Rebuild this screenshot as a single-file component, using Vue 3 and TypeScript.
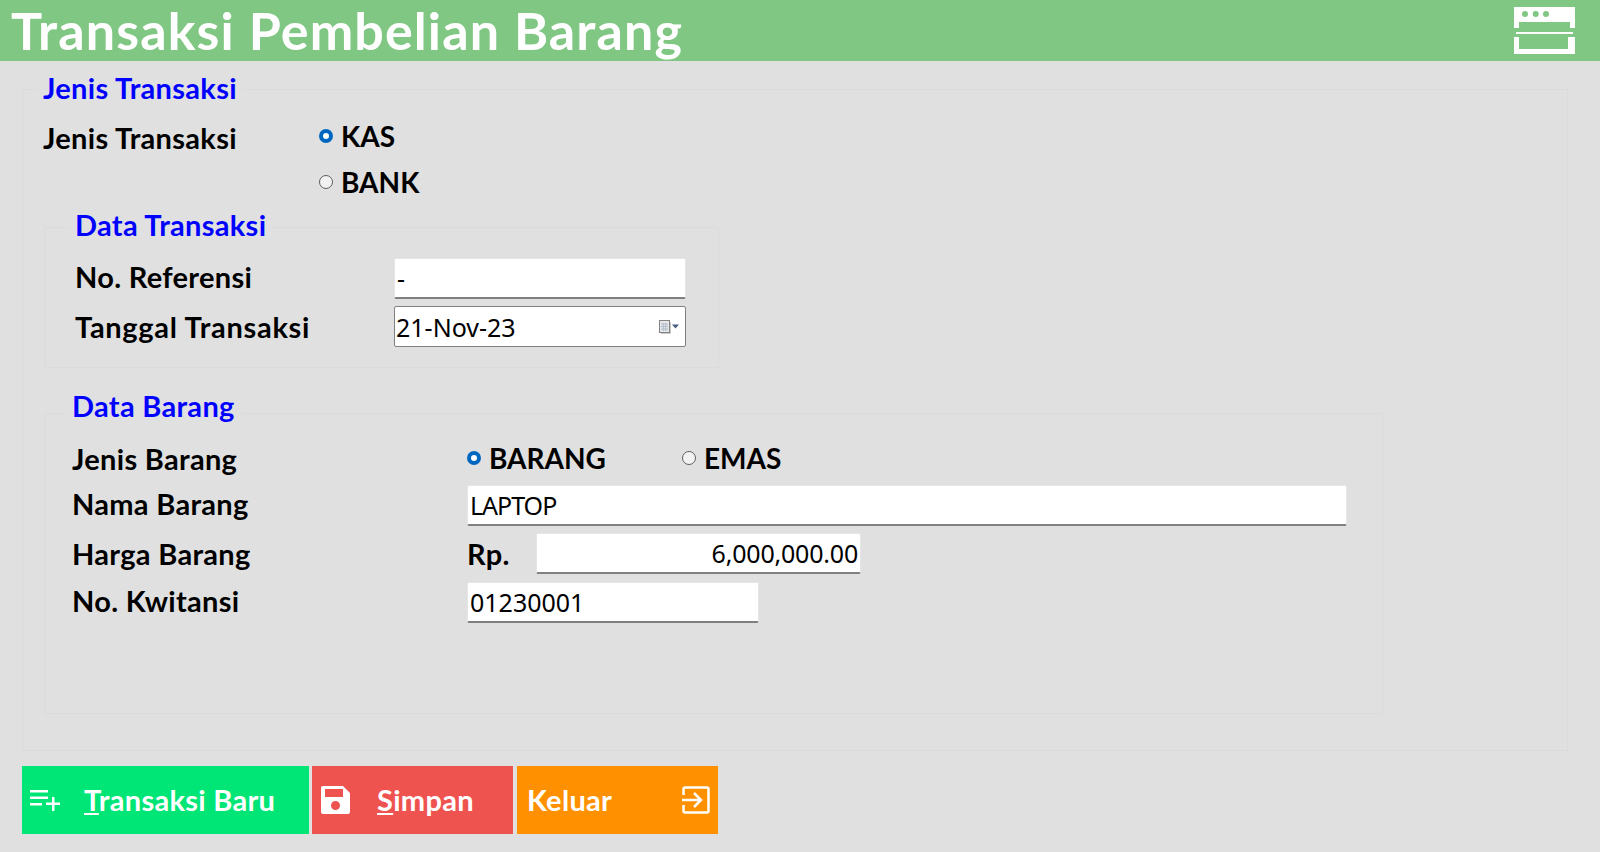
<script setup lang="ts">
import { ref } from 'vue';

const jenisTransaksi = ref('KAS');
const jenisBarang = ref('BARANG');
const noReferensi = ref('-');
const tanggal = ref('21-Nov-23');
const namaBarang = ref('LAPTOP');
const harga = ref('6,000,000.00');
const noKwitansi = ref('01230001');
</script>

<template>
  <div class="page">
    <header class="top">
      <h1>Transaksi Pembelian Barang</h1>
      <svg class="top-icon" viewBox="0 0 61 47" aria-hidden="true">
        <path fill-rule="evenodd" d="M0 0h61v21h-5v-6H5v6H0zM8 7a3 3 0 1 0 6 0a3 3 0 1 0-6 0zM18.700 7a3 3 0 1 0 6 0a3 3 0 1 0-6 0zM29 7a3 3 0 1 0 6 0a3 3 0 1 0-6 0z" fill="#fff" />
        <rect x="2" y="25" width="57" height="2" fill="#fff" />
        <path d="M0 30h5v12h49V30h7v17H0z" fill="#fff" />
      </svg>
    </header>

    <fieldset class="box outer">
      <legend>Jenis Transaksi</legend>
      <div class="jenis-row">
        <span class="label">Jenis Transaksi</span>
        <div class="radio-stack">
          <label class="radio"><input v-model="jenisTransaksi" type="radio" value="KAS" />KAS</label>
          <label class="radio"><input v-model="jenisTransaksi" type="radio" value="BANK" />BANK</label>
        </div>
      </div>

      <fieldset class="box data-transaksi">
        <legend>Data Transaksi</legend>
        <div class="form-grid">
          <span class="label up">No. Referensi</span>
          <input v-model="noReferensi" class="field" type="text" />
          <span class="label wide">Tanggal Transaksi</span>
          <div class="date-field">
            <input v-model="tanggal" type="text" />
            <svg width="24" height="16" viewBox="0 0 24 16" aria-hidden="true">
              <rect x="2" y="3" width="10" height="12" fill="#c9c9c9" />
              <rect x="0.500" y="1.500" width="10" height="12" fill="#e3e6ec" stroke="#86827f" />
              <path d="M2 5h7M2 7.500h7M2 10h7M4.300 4v8M6.700 4v8" stroke="#b4bcc9" fill="none" />
              <path d="M13 5.500h7l-3.500 4z" fill="#4a5d80" />
            </svg>
          </div>
        </div>
      </fieldset>

      <fieldset class="box data-barang">
        <legend>Data Barang</legend>
        <div class="form-grid barang-grid">
          <span class="label">Jenis Barang</span>
          <div class="radio-line">
            <label class="radio"><input v-model="jenisBarang" type="radio" value="BARANG" />BARANG</label>
            <label class="radio"><input v-model="jenisBarang" type="radio" value="EMAS" />EMAS</label>
          </div>
          <span class="label up">Nama Barang</span>
          <input v-model="namaBarang" class="field nama" type="text" />
          <span class="label">Harga Barang</span>
          <div class="harga">
            <span class="label">Rp.</span>
            <input v-model="harga" class="field right" type="text" />
          </div>
          <span class="label last-label">No. Kwitansi</span>
          <input v-model="noKwitansi" class="field kwitansi last" type="text" />
        </div>
      </fieldset>
    </fieldset>

    <div class="actions">
      <button class="btn green" type="button">
        <svg width="31" height="22" viewBox="0 0 31 22" aria-hidden="true">
          <path d="M0 1h18v2.500H0zM0 7.500h18V10H0zM0 14h12v2.500H0zM22 8h2.500v5.500H30V16h-5.500v6H22v-6h-6v-2.500h6z" fill="#fff" />
        </svg>
        <span class="txt"><u>T</u>ransaksi Baru</span>
      </button>
      <button class="btn red" type="button">
        <svg width="29" height="28" viewBox="0 0 29 28" aria-hidden="true">
          <path fill-rule="evenodd" d="M2 0h20l7 7v19a2 2 0 0 1-2 2H2a2 2 0 0 1-2-2V2a2 2 0 0 1 2-2zM4 3v8h18V3zM10 19.500a4.500 4.500 0 1 0 9 0a4.500 4.500 0 1 0-9 0z" fill="#fff" />
        </svg>
        <span class="txt"><u>S</u>impan</span>
      </button>
      <button class="btn orange" type="button">
        <span class="txt">Keluar</span>
        <svg width="28" height="28" viewBox="0 0 28 28" aria-hidden="true">
          <path d="M1.500 9V3a1.500 1.500 0 0 1 1.500-1.500h22A1.500 1.500 0 0 1 26.500 3v22a1.500 1.500 0 0 1-1.500 1.500H3A1.500 1.500 0 0 1 1.500 25v-6M0 14h19M12 7l7 7-7 7" fill="none" stroke="#fff" stroke-width="2.500" />
        </svg>
      </button>
    </div>
  </div>
</template>

<style scoped>
.page {
  height: 852px;
  overflow: hidden;
  background: #e0e0e0;
  font-family: Lato, 'Noto Sans', sans-serif;
  color: #000;
}
.top {
  height: 61px;
  display: flex;
  align-items: flex-start;
  justify-content: space-between;
  overflow: hidden;
  background: #81c784;
  padding: 0 25px 0 11px;
  box-sizing: border-box;
}
.top h1 {
  margin: 0;
  font-size: 52px;
  line-height: 61px;
  letter-spacing: 1.12px;
  font-weight: 700;
  color: #fff;
}
.top-icon {
  width: 61px;
  height: 47px;
  margin-top: 7px;
}
.box {
  min-width: 0;
  margin: 0;
  border: 1px solid #dbdbdb;
  box-sizing: border-box;
}
legend {
  color: #0000ff;
  font-size: 29px;
  font-weight: 700;
  line-height: 38px;
  letter-spacing: 0.3px;
  padding: 0 6px;
}
.outer {
  height: 682px;
  margin: 8px 32px 0 22px;
  padding: 0 0 0 20px;
}
.outer > legend {
  margin-left: -6px;
  padding-bottom: 2px;
}
.label {
  font-size: 29px;
  font-weight: 700;
  line-height: 38px;
  letter-spacing: 0.3px;
}
.wide {
  letter-spacing: 0.7px;
}
.up {
  margin: -2px 0 2px;
}
.last-label {
  margin: -1px 0 1px;
}
.jenis-row {
  display: grid;
  grid-template-columns: 276px 1fr;
  padding-top: 10px;
}
.radio-stack {
  display: flex;
  flex-direction: column;
  gap: 8px;
  margin-top: -2px;
}
.radio {
  display: flex;
  align-items: center;
  gap: 8px;
  font-size: 28px;
  font-weight: 700;
  line-height: 38px;
}
.radio input {
  appearance: none;
  width: 14px;
  height: 14px;
  margin: 0;
  border: 1px solid #5f5f5f;
  border-radius: 50%;
  background: #f2f2f2;
  box-sizing: border-box;
}
.radio input:checked {
  border: 4px solid #0067c0;
  background: #fff;
}
.data-transaksi {
  width: 675px;
  height: 162px;
  margin: 5px 0 0 1px;
  padding: 0 0 0 30px;
}
.data-transaksi > legend {
  margin-left: -6px;
  padding-bottom: 4px;
}
.form-grid {
  display: grid;
  grid-template-columns: 319px 1fr;
  align-items: center;
  row-gap: 7px;
  padding-top: 10px;
}
.field,
.date-field {
  height: 41px;
  box-sizing: border-box;
  background: #fff;
  font-family: 'Noto Sans', Lato, sans-serif;
  font-size: 25px;
  color: #000;
}
.field {
  width: 292px;
  border: 1px solid #e6e6e6;
  border-bottom: 2px solid #808080;
  border-radius: 2px;
  padding: 0 2px;
  outline: none;
}
.date-field {
  display: flex;
  align-items: center;
  width: 292px;
  border: 1px solid #7f7f7f;
  border-radius: 2px;
  padding: 0 2px 0 1px;
}
.date-field input {
  flex: 1;
  min-width: 0;
  border: 0;
  padding: 0;
  outline: none;
  background: transparent;
  font: inherit;
}
.data-barang {
  width: 1339px;
  height: 327px;
  margin: 19px 0 0 1px;
  padding: 0 0 0 27px;
}
.data-barang > legend {
  margin-left: -6px;
  padding-bottom: 14px;
}
.barang-grid {
  grid-template-columns: 395px 1fr;
  padding-top: 1px;
}
.radio-line {
  display: flex;
  gap: 76px;
  margin-top: -3px;
}
.nama {
  width: 880px;
  letter-spacing: -1px;
}
.harga {
  display: grid;
  grid-template-columns: 69px 1fr;
  align-items: center;
}
.right {
  width: 325px;
  text-align: right;
  letter-spacing: -0.2px;
}
.kwitansi {
  width: 292px;
}
.last {
  margin-top: 1px;
}
.actions {
  display: flex;
  gap: 3px;
  margin: 15px 0 0 22px;
}
.btn {
  height: 68px;
  display: flex;
  align-items: center;
  justify-content: space-between;
  border: 0;
  color: #fff;
  font-family: Lato, 'Noto Sans', sans-serif;
  font-size: 29px;
  font-weight: 700;
  letter-spacing: 0.3px;
  padding: 0;
}
.txt {
  margin-bottom: 2px;
}
.green {
  width: 287px;
  background: #00e676;
  justify-content: flex-start;
  padding-left: 8px;
  gap: 23px;
}
.red {
  width: 201px;
  background: #ef5350;
  justify-content: flex-start;
  padding-left: 9px;
  gap: 27px;
}
.orange {
  width: 201px;
  margin-left: 1px;
  background: #ff9100;
  padding: 0 8px 0 10px;
}
</style>

<style>
html,
body {
  margin: 0;
  background: #e0e0e0;
}
</style>
